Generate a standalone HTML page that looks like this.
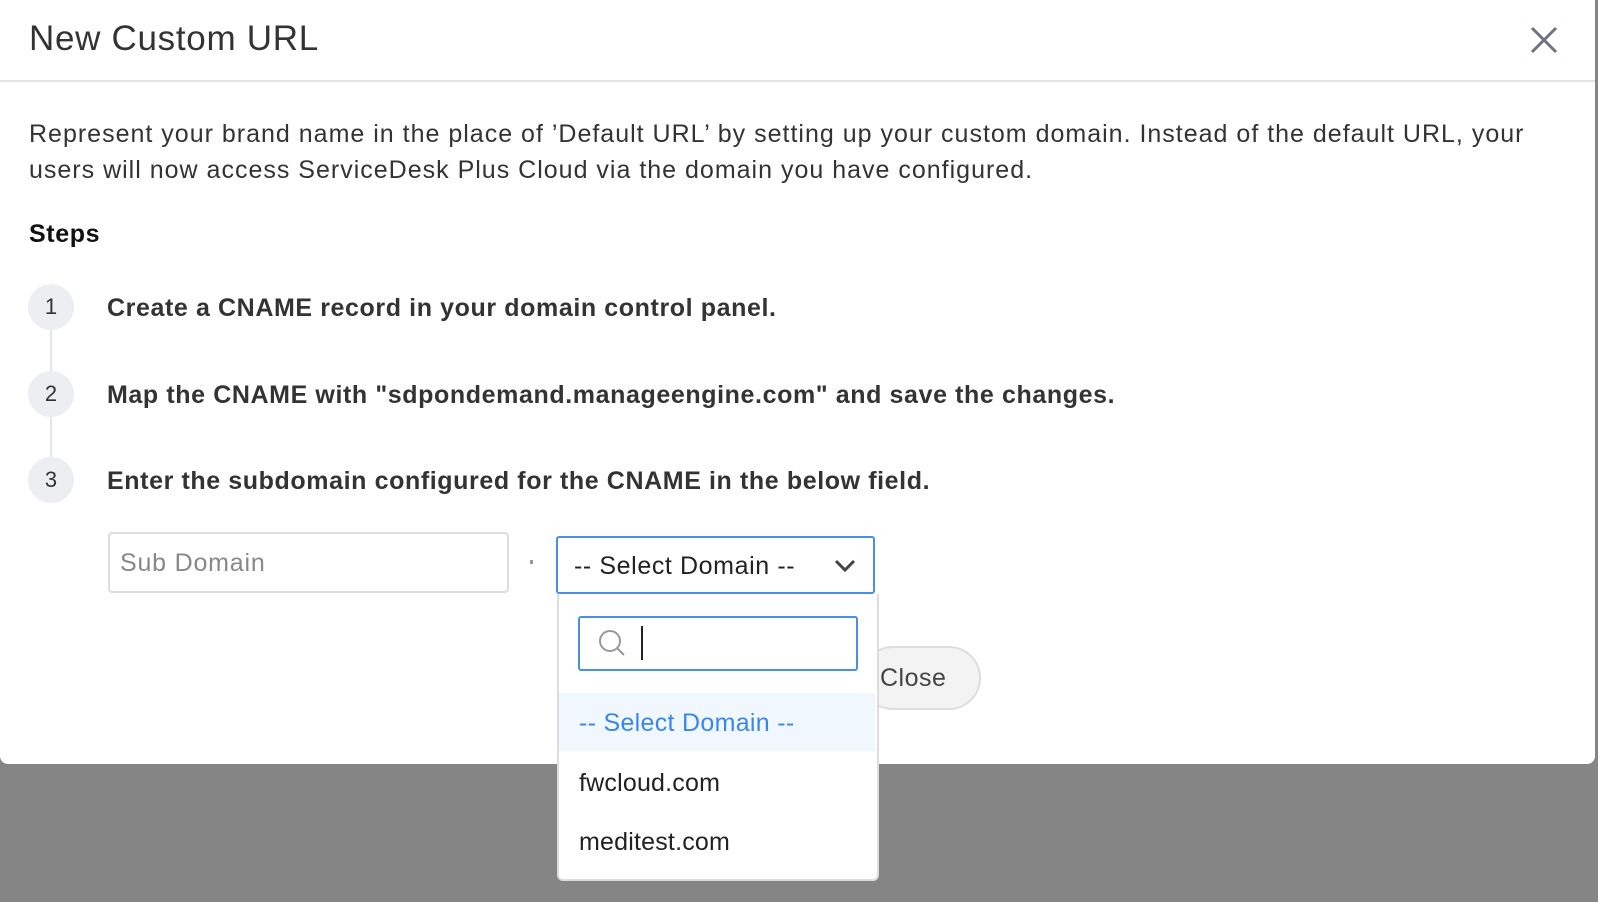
<!DOCTYPE html>
<html><head><style>
body{margin:0;width:1598px;height:902px;background:#858585;font-family:"Liberation Sans",sans-serif;color:#222;position:relative;overflow:hidden}
.modal{position:absolute;left:0;top:0;width:1595px;height:764px;background:#fff;border-radius:0 0 8px 8px}
.abs{position:absolute}
.circle{position:absolute;left:28px;width:46px;height:46px;border-radius:50%;background:#eceef1;font-size:22px;line-height:46px;text-align:center;color:#333}
.step{position:absolute;left:107px;font-size:25px;font-weight:bold;color:#333;letter-spacing:0.6px}
</style></head><body>
<div class="modal">
<div class="abs" style="left:29px;top:19px;font-size:35px;color:#333;letter-spacing:0.7px">New Custom URL</div>
<svg class="abs" style="left:1529px;top:25px" width="30" height="30"><path d="M3 3L27 27M27 3L3 27" stroke="#6c757d" stroke-width="3"/></svg>
<div class="abs" style="left:0;top:80px;width:1595px;height:2px;background:#e3e3e3"></div>
<div class="abs" style="left:29px;top:116px;font-size:25px;line-height:36px;color:#333;width:1540px;letter-spacing:1.0px">Represent your brand name in the place of ’Default URL’ by setting up your custom domain. Instead of the default URL, your users will now access ServiceDesk Plus Cloud via the domain you have configured.</div>
<div class="abs" style="left:29px;top:220px;font-size:25px;font-weight:bold;color:#111;letter-spacing:0.6px">Steps</div>
<div class="abs" style="left:50px;top:320px;width:2px;height:150px;background:#e3e5e8"></div>
<div class="circle" style="top:284px">1</div>
<div class="circle" style="top:371px">2</div>
<div class="circle" style="top:457px">3</div>
<div class="step" style="top:294px">Create a CNAME record in your domain control panel.</div>
<div class="step" style="top:381px">Map the CNAME with "sdpondemand.manageengine.com" and save the changes.</div>
<div class="step" style="top:467px">Enter the subdomain configured for the CNAME in the below field.</div>
<div class="abs" style="left:108px;top:532px;width:397px;height:57px;border:2px solid #ddd;border-radius:4px"></div>
<div class="abs" style="left:120px;top:549px;font-size:25px;color:#888;letter-spacing:0.8px">Sub Domain</div>
<div class="abs" style="left:530px;top:560px;width:3px;height:4px;background:#999"></div>
<div class="abs" style="left:861px;top:646px;width:116px;height:60px;border:2px solid #ddd;border-radius:32px;background:#f3f3f3"></div>
<div class="abs" style="left:880px;top:664px;font-size:25px;color:#444;letter-spacing:0.5px">Close</div>
<div class="abs" style="left:556px;top:536px;width:315px;height:54px;border:2px solid #4a90e2;border-radius:3px;background:#fff"></div>
<div class="abs" style="left:574px;top:552px;font-size:25px;color:#222;letter-spacing:0.6px">-- Select Domain --</div>
<svg class="abs" style="left:834px;top:558px" width="22" height="16"><path d="M2 3L11 12L20 3" stroke="#444" stroke-width="3" fill="none"/></svg>
</div>
<div class="abs" style="left:557px;top:594px;width:318px;height:285px;background:#fff;border:2px solid #ddd;border-top:none;border-radius:0 0 6px 6px"></div>
<div class="abs" style="left:578px;top:616px;width:276px;height:51px;border:2px solid #4a90e2;border-radius:3px"></div>
<svg class="abs" style="left:597px;top:628px" width="32" height="32"><circle cx="13" cy="13" r="10" stroke="#999" stroke-width="2" fill="none"/><path d="M20 20L27 27" stroke="#999" stroke-width="2"/></svg>
<div class="abs" style="left:641px;top:626px;width:2px;height:34px;background:#222"></div>
<div class="abs" style="left:559px;top:693px;width:316px;height:58px;background:#f0f7fe"></div>
<div class="abs" style="left:579px;top:709px;font-size:25px;color:#3b86ea;letter-spacing:0.3px">-- Select Domain --</div>
<div class="abs" style="left:579px;top:769px;font-size:25px;color:#222;letter-spacing:0.2px">fwcloud.com</div>
<div class="abs" style="left:579px;top:828px;font-size:25px;color:#222;letter-spacing:0.2px">meditest.com</div>
</body></html>
